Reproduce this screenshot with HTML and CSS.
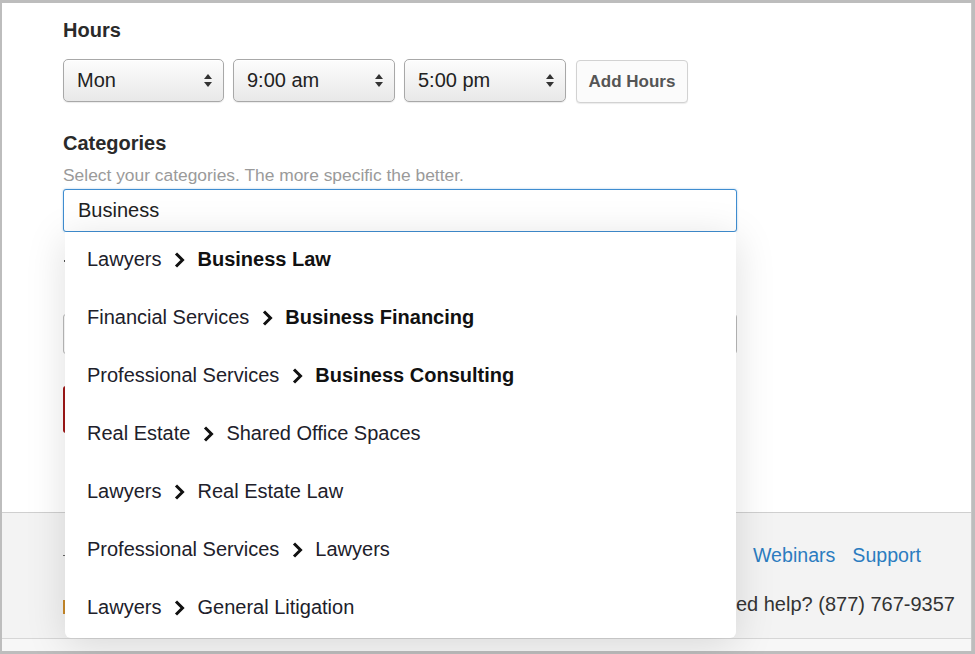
FILE: index.html
```html
<!DOCTYPE html>
<html lang="en">
<head>
    <meta charset="UTF-8">
    <meta name="viewport" content="width=device-width, initial-scale=1.0">
    <title>Business Details</title>
    <link rel="stylesheet" href="styles.css">
</head>
<body class="body">
    <div class="page">
        <div class="main">
            <p class="label">Hours</p>
            <div class="hours">
                <div class="select">
                    <span>Mon</span>
                    <svg class="updown" width="8" height="13" viewBox="0 0 8 13"><polygon points="0,5 4,0 8,5"/><polygon points="0,8 4,13 8,8"/></svg>
                </div>
                <div class="select">
                    <span>9:00 am</span>
                    <svg class="updown" width="8" height="13" viewBox="0 0 8 13"><polygon points="0,5 4,0 8,5"/><polygon points="0,8 4,13 8,8"/></svg>
                </div>
                <div class="select">
                    <span>5:00 pm</span>
                    <svg class="updown" width="8" height="13" viewBox="0 0 8 13"><polygon points="0,5 4,0 8,5"/><polygon points="0,8 4,13 8,8"/></svg>
                </div>
                <button class="add-hours">Add Hours</button>
            </div>

            <p class="label categories">Categories</p>
            <p class="help">Select your categories. The more specific the better.</p>

            <div class="search">
                <input class="search-input" type="text" value="Business">

                <ul class="suggestions">
                    <li><span>Lawyers</span><svg class="chev" width="12" height="16" viewBox="0 0 12 16"><path d="M3 1.5 L9.5 8 L3 14.5"/></svg><b>Business Law</b></li>
                    <li><span>Financial Services</span><svg class="chev" width="12" height="16" viewBox="0 0 12 16"><path d="M3 1.5 L9.5 8 L3 14.5"/></svg><b>Business Financing</b></li>
                    <li><span>Professional Services</span><svg class="chev" width="12" height="16" viewBox="0 0 12 16"><path d="M3 1.5 L9.5 8 L3 14.5"/></svg><b>Business Consulting</b></li>
                    <li><span>Real Estate</span><svg class="chev" width="12" height="16" viewBox="0 0 12 16"><path d="M3 1.5 L9.5 8 L3 14.5"/></svg><span>Shared Office Spaces</span></li>
                    <li><span>Lawyers</span><svg class="chev" width="12" height="16" viewBox="0 0 12 16"><path d="M3 1.5 L9.5 8 L3 14.5"/></svg><span>Real Estate Law</span></li>
                    <li><span>Professional Services</span><svg class="chev" width="12" height="16" viewBox="0 0 12 16"><path d="M3 1.5 L9.5 8 L3 14.5"/></svg><span>Lawyers</span></li>
                    <li><span>Lawyers</span><svg class="chev" width="12" height="16" viewBox="0 0 12 16"><path d="M3 1.5 L9.5 8 L3 14.5"/></svg><span>General Litigation</span></li>
                </ul>
            </div>

            <!-- next section, sits under the open suggestion list -->
            <div class="hidden-label"><span class="mark-dot"></span></div>
            <div class="hidden-help"><span class="mark-tick"></span></div>
            <div class="field"></div>
            <div class="save"></div>
        </div>

        <div class="footer">
            <div class="footer-left">
                <span class="footer-dash"></span>
                <span class="logo-mark"></span>
            </div>
            <div class="footer-right">
                <p class="links"><a href="#">Webinars</a><a href="#">Support</a></p>
                <p class="phone">Need help? (877) 767-9357</p>
            </div>
        </div>
        <div class="footer-band"></div>
    </div>
</body>
</html>
```

FILE: styles.css
```css
* {
    box-sizing: border-box;
}

.body {
    margin: 0;
    background-color: #bdbdbd;
    font-family: "Liberation Sans", Arial, sans-serif;
    color: #222;
    padding: 3px 2px 3px 2px;
    height: 654px;
    overflow: hidden;
}

.page {
    background-color: #fff;
    border-right: 1px solid #c8c8c8;
    margin-right: 1px;
    height: 648px;
    display: flex;
    flex-direction: column;
}

.main {
    height: 509px;
    padding: 15px 0 0 61px;
}

p {
    margin: 0;
}

.label {
    font-size: 20px;
    font-weight: bold;
    line-height: 24px;
    color: #2a2a2a;
}

.hours {
    display: flex;
    gap: 9px;
    margin-top: 17px;
}

.select {
    width: 162px;
    height: 43px;
    display: flex;
    align-items: center;
    justify-content: space-between;
    padding: 0 11px 0 13px;
    border: 1px solid #a8a8a8;
    border-radius: 5px;
    background: linear-gradient(#fdfdfd, #e8e8e8);
    box-shadow: inset 0 1px 0 #fff, 0 1px 1px rgba(0, 0, 0, 0.08);
    font-size: 20px;
    color: #222;
}

.select:first-child {
    width: 161px;
}

.updown {
    fill: #333;
}

.add-hours {
    margin-left: 1px;
    margin-top: 1px;
    width: 112px;
    height: 43px;
    border: 1px solid #d2d2d2;
    border-radius: 4px;
    background-color: #fbfbfb;
    box-shadow: 0 1px 1px rgba(0, 0, 0, 0.08);
    font-family: "Liberation Sans", Arial, sans-serif;
    font-size: 17px;
    font-weight: bold;
    color: #555;
    padding: 0;
}

.categories {
    margin-top: 28px;
}

.help {
    margin-top: 10px;
    font-size: 17.4px;
    line-height: 20px;
    color: #9a9a9a;
}

.search {
    position: relative;
    width: 674px;
    margin-top: 4px;
}

.search-input {
    display: block;
    width: 674px;
    height: 43px;
    border: 1px solid #3f8dd0;
    border-radius: 3px;
    box-shadow: 0 0 2px rgba(63, 141, 208, 0.5);
    padding: 0 14px;
    font-family: "Liberation Sans", Arial, sans-serif;
    font-size: 20px;
    color: #222;
    outline: none;
}

.suggestions {
    position: absolute;
    top: 43px;
    left: 2px;
    width: 671px;
    margin: 0;
    padding: 0;
    list-style: none;
    background-color: #fff;
    border-radius: 0 0 6px 6px;
    box-shadow: 0 6px 40px rgba(0, 0, 0, 0.13);
    z-index: 2;
}

.suggestions li {
    height: 58px;
    display: flex;
    align-items: center;
    gap: 12px;
    padding: 0 0 3px 22px;
    font-size: 20px;
    color: #20202a;
}

.suggestions b {
    color: #111;
}

.chev {
    fill: none;
    stroke: #111;
    stroke-width: 3;
}

.hidden-label {
    margin-top: 28px;
    height: 8px;
}

.mark-dot {
    display: block;
    width: 2px;
    height: 2px;
    margin-left: 1px;
    background-color: #555;
}

.hidden-help {
    margin-top: 20px;
    height: 14px;
}

.mark-tick {
    display: block;
    width: 2px;
    height: 3px;
    margin-left: 2px;
    background-color: #777;
}

.field {
    margin-top: 12px;
    width: 674px;
    height: 40px;
    border: 1px solid #bbb;
    border-radius: 3px;
}

.save {
    margin-top: 32px;
    width: 120px;
    height: 47px;
    border-radius: 3px;
    background-color: #a01818;
}

.footer {
    height: 127px;
    border-top: 1px solid #cfcfcf;
    border-bottom: 1px solid #d6d6d6;
    background-color: #f3f3f3;
    display: flex;
    justify-content: space-between;
    padding: 30px 16px 0 61px;
}

.footer-left {
    display: flex;
    flex-direction: column;
    align-items: flex-start;
}

.footer-dash {
    width: 4px;
    height: 1px;
    margin-top: 12px;
    background-color: #666;
}

.logo-mark {
    width: 3px;
    height: 14px;
    margin-top: 44px;
    background-color: #c98a2a;
}

.footer-right {
    display: flex;
    flex-direction: column;
    align-items: flex-end;
}

.links {
    display: flex;
    gap: 17px;
    font-size: 19.6px;
    line-height: 24px;
    margin-right: 34px;
}

.links a {
    color: #2b7cc0;
    text-decoration: none;
}

.phone {
    margin-top: 25px;
    font-size: 20px;
    line-height: 24px;
    color: #333;
}

.footer-band {
    height: 12px;
    background-color: #f7f7f7;
}
```
